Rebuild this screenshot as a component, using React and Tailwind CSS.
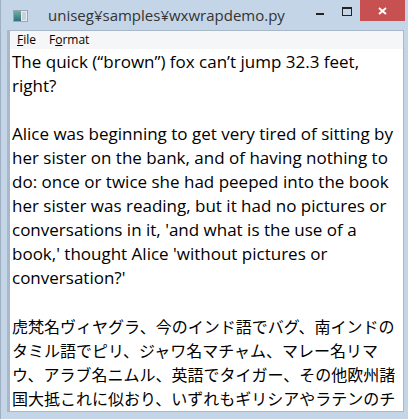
import React from "react";

const latinLines = [
  "The quick (\u201cbrown\u201d) fox can\u2019t jump 32.3 feet,",
  "right?",
  "",
  "Alice was beginning to get very tired of sitting by",
  "her sister on the bank, and of having nothing to",
  "do: once or twice she had peeped into the book",
  "her sister was reading, but it had no pictures or",
  "conversations in it, 'and what is the use of a",
  "book,' thought Alice 'without pictures or",
  "conversation?'",
  "",
];

const jaLines = [
  "虎梵名ヴィヤグラ、今のインド語でバグ、南インドの",
  "タミル語でピリ、ジャワ名マチャム、マレー名リマ",
  "ウ、アラブ名ニムル、英語でタイガー、その他欧州諸",
  "国大抵これに似おり、いずれもギリシアやラテンのチ",
];

const AppIcon = () => (
  <svg width="15" height="12" viewBox="0 0 15 12">
    <defs>
      <linearGradient id="ico" x1="0" y1="0" x2="0" y2="1">
        <stop offset="0" stopColor="#6fb0a0" />
        <stop offset="1" stopColor="#2f6f7f" />
      </linearGradient>
    </defs>
    <rect x="0.5" y="0.5" width="14" height="11" fill="#e8ecef" stroke="#9aa6b2" />
    <rect x="1" y="1" width="7" height="10" fill="url(#ico)" />
    <rect x="9" y="2" width="4" height="8" fill="#c9d2da" />
  </svg>
);

export default function App() {
  return (
    <div
      className="flex h-[419px] w-[408px] flex-col overflow-hidden border-l border-[#9fb0c2] bg-[#c4d5e7]"
      style={{ fontFamily: "'Open Sans', 'Noto Sans', sans-serif" }}
    >
      {/* title bar */}
      <div className="relative flex h-[30px] shrink-0 items-start">
        <div className="ml-[12px] mt-[10px]">
          <AppIcon />
        </div>
        <div className="ml-[20px] mt-[5px] text-[15px] leading-[20px] text-[#333]">
          uniseg¥samples¥wxwrapdemo.py
        </div>
        <div className="ml-auto flex items-start">
          <div className="mr-[18px] mt-[13px] h-[2px] w-[8px] bg-[#222]" />
          <div className="mr-[8px] mt-[7px] h-[9px] w-[10px] border border-t-2 border-[#222]" />
          <div className="mr-[3px] flex h-[21px] w-[45px] items-center justify-center bg-[#c75050]">
            <svg width="9" height="8" viewBox="0 0 9 8">
              <path d="M1 1 L8 7 M8 1 L1 7" stroke="#fff" strokeWidth="2" />
            </svg>
          </div>
        </div>
      </div>

      {/* client area */}
      <div className="ml-[6px] mr-[4px] flex min-h-0 flex-1 flex-col border-l-[3px] border-r border-t border-b border-[#a9b8c8] bg-white">
        <div className="flex h-[18px] shrink-0 items-center gap-[13px] bg-[#f5f6f7] pl-[7px] text-[12px] text-black">
          <span>
            <span className="underline">F</span>ile
          </span>
          <span>
            F<span className="underline">o</span>rmat
          </span>
        </div>
        <div className="min-h-0 flex-1 overflow-hidden bg-white pl-[2px] pt-[1px] text-black">
          {latinLines.map((l, i) => (
            <div key={i} className="h-[24px] whitespace-nowrap text-[17px] leading-[24px]">
              {l}
            </div>
          ))}
          {jaLines.map((l, i) => (
            <div
              key={"j" + i}
              className="h-[24px] whitespace-nowrap text-[16px] leading-[24px]"
              style={{ fontFamily: "'Noto Sans CJK JP', sans-serif" }}
            >
              {l}
            </div>
          ))}
        </div>
      </div>
      <div className="h-[7px] shrink-0" />
    </div>
  );
}
